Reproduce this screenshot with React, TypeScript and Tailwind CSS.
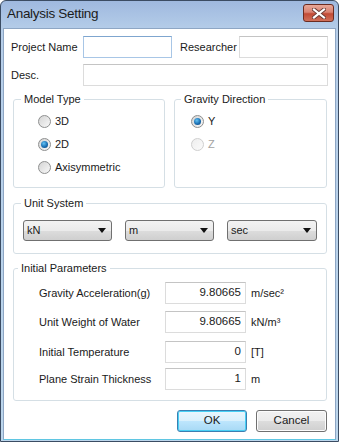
import React from "react";

function TextBox({
  value = "",
  className = "",
  focused = false,
}: {
  value?: string;
  className?: string;
  focused?: boolean;
}) {
  return (
    <div
      className={`h-[22px] border bg-white flex items-center justify-end pr-[4px] text-[11.5px] text-[#1a1a1a] ${
        focused
          ? "border-[#a8c6e6] border-t-[#7fa6cf]"
          : "border-[#dcdcdc] border-t-[#c4c4c4]"
      } ${className}`}
    >
      {value}
    </div>
  );
}

function Radio({
  label,
  checked = false,
  disabled = false,
}: {
  label: string;
  checked?: boolean;
  disabled?: boolean;
}) {
  return (
    <div className="h-[23px] flex items-center gap-[4px]">
      <span
        className={`w-[13px] h-[13px] rounded-full border flex items-center justify-center ${
          disabled
            ? "border-[#cfcfcf] bg-[linear-gradient(135deg,#eeeeee,#fbfbfb)]"
            : "border-[#8e8f8f] bg-[linear-gradient(135deg,#d4d4d4,#f8f8f8)]"
        }`}
      >
        {checked && (
          <span className="w-[7px] h-[7px] rounded-full bg-[radial-gradient(circle_at_40%_35%,#64c3f4,#1a6fb3_55%,#0c3f73)]" />
        )}
      </span>
      <span className={disabled ? "text-[#a3a3a3]" : "text-[#1a1a1a]"}>
        {label}
      </span>
    </div>
  );
}

function Combo({ value, className = "" }: { value: string; className?: string }) {
  return (
    <div
      className={`h-[21px] rounded-[3px] border border-[#707070] bg-[linear-gradient(to_bottom,#f3f3f3_0%,#ebebeb_50%,#dddddd_50%,#cfcfcf_100%)] flex items-center justify-between pl-[3px] pr-[5px] ${className}`}
    >
      <span>{value}</span>
      <svg width="8" height="5" viewBox="0 0 8 5" aria-hidden="true">
        <path d="M0 0h8L4 5z" fill="#111" />
      </svg>
    </div>
  );
}

function Group({
  title,
  className = "",
  legendClass = "ml-[7px]",
  children,
}: {
  title: string;
  className?: string;
  legendClass?: string;
  children: React.ReactNode;
}) {
  return (
    <fieldset className={`border border-[#d5dfe5] rounded-[3px] ${className}`}>
      <legend className={`px-[3px] leading-[13px] ${legendClass}`}>{title}</legend>
      {children}
    </fieldset>
  );
}

function ParamRow({
  label,
  value,
  unit,
  className = "",
}: {
  label: string;
  value: string;
  unit: React.ReactNode;
  className?: string;
}) {
  return (
    <div className={`flex items-center h-[22px] ${className}`}>
      <span className="w-[126px]">{label}</span>
      <TextBox value={value} className="w-[81px]" />
      <span className="ml-[5px]">{unit}</span>
    </div>
  );
}

export default function App() {
  return (
    <div className="w-[339px] h-[442px] flex flex-col border border-[#3b4c63] rounded-t-[6px] bg-[linear-gradient(to_bottom,#9fb9df_0px,#b6cee9_30px,#bcd6ec_100%)] overflow-hidden font-['Liberation_Sans',Arial,sans-serif] text-[11px] text-[#1a1a1a]">
      {/* Title bar */}
      <div className="h-[27px] flex items-center justify-between pl-[6px] pr-[4px]">
        <span className="text-[13.5px] tracking-[-0.3px] text-[#1b1b1b]">Analysis Setting</span>
        <div className="w-[31px] h-[18px] mt-[-3px] rounded-[3px] border border-[#6b2b20] bg-[linear-gradient(to_bottom,#e8a898_0%,#d98272_45%,#c24a35_55%,#d0705a_100%)] flex items-center justify-center">
          <svg width="14" height="11" viewBox="0 0 14 11" aria-hidden="true">
            <path d="M2 1.5L12 9.5M12 1.5L2 9.5" stroke="#6a3b35" strokeWidth="4" strokeLinecap="square" />
            <path d="M2 1.5L12 9.5M12 1.5L2 9.5" stroke="#ffffff" strokeWidth="2.2" strokeLinecap="square" />
          </svg>
        </div>
      </div>

      {/* Client area */}
      <div className="flex-1 mx-[2px] mb-[1px] border border-[#8ea6c4] border-b-[#5fc6e2] bg-white pt-[7px] pl-[7px]">
        <div className="flex items-center h-[22px]">
          <span className="w-[72px]">Project Name</span>
          <TextBox focused className="w-[89px]" />
          <span className="ml-[8px] w-[59px]">Researcher</span>
          <TextBox className="w-[89px]" />
        </div>
        <div className="flex items-center h-[22px] mt-[6px]">
          <span className="w-[72px]">Desc.</span>
          <TextBox className="w-[245px]" />
        </div>

        <div className="flex mt-[7px] ml-[2px] gap-[9px]">
          <Group title="Model Type" className="w-[152px] h-[95px]">
            <div className="pt-[4px] pl-[24px]">
              <Radio label="3D" />
              <Radio label="2D" checked />
              <Radio label="Axisymmetric" />
            </div>
          </Group>
          <Group title="Gravity Direction" className="w-[153px] h-[95px]" legendClass="ml-[6px]">
            <div className="pt-[4px] pl-[16px]">
              <Radio label="Y" checked />
              <Radio label="Z" disabled />
            </div>
          </Group>
        </div>

        <Group title="Unit System" className="w-[314px] h-[57px] ml-[2px] mt-[9px]">
          <div className="flex pt-[10px] pl-[9px] gap-[13px]">
            <Combo value="kN" className="w-[89px]" />
            <Combo value="m" className="w-[89px]" />
            <Combo value="sec" className="w-[90px]" />
          </div>
        </Group>

        <Group
          title="Initial Parameters"
          className="w-[314px] h-[139px] ml-[2px] mt-[8px]"
          legendClass="ml-[4px]"
        >
          <div className="pt-[7px] pl-[25px]">
            <ParamRow label="Gravity Acceleration(g)" value="9.80665" unit="m/sec²" />
            <ParamRow label="Unit Weight of Water" value="9.80665" unit="kN/m³" className="mt-[7px]" />
            <ParamRow label="Initial Temperature" value="0" unit="[T]" className="mt-[8px]" />
            <ParamRow label="Plane Strain Thickness" value="1" unit="m" className="mt-[5px]" />
          </div>
        </Group>

        <div className="flex justify-end gap-[9px] pr-[8px] mt-[9px]">
          <button className="w-[70px] h-[22px] rounded-[3px] border border-[#3c7fb1] shadow-[inset_0_0_0_1px_#48d0f5] bg-[linear-gradient(to_bottom,#eaf6fd_0%,#d9f0fc_50%,#bee6fd_50%,#a7d9f5_100%)] text-[11.5px] text-[#1a1a1a]">
            OK
          </button>
          <button className="w-[71px] h-[22px] rounded-[3px] border border-[#707070] shadow-[inset_0_0_0_1px_#fcfcfc] bg-[linear-gradient(to_bottom,#f2f2f2_0%,#ebebeb_50%,#dddddd_50%,#cfcfcf_100%)] text-[11.5px] text-[#1a1a1a]">
            Cancel
          </button>
        </div>
      </div>
    </div>
  );
}
